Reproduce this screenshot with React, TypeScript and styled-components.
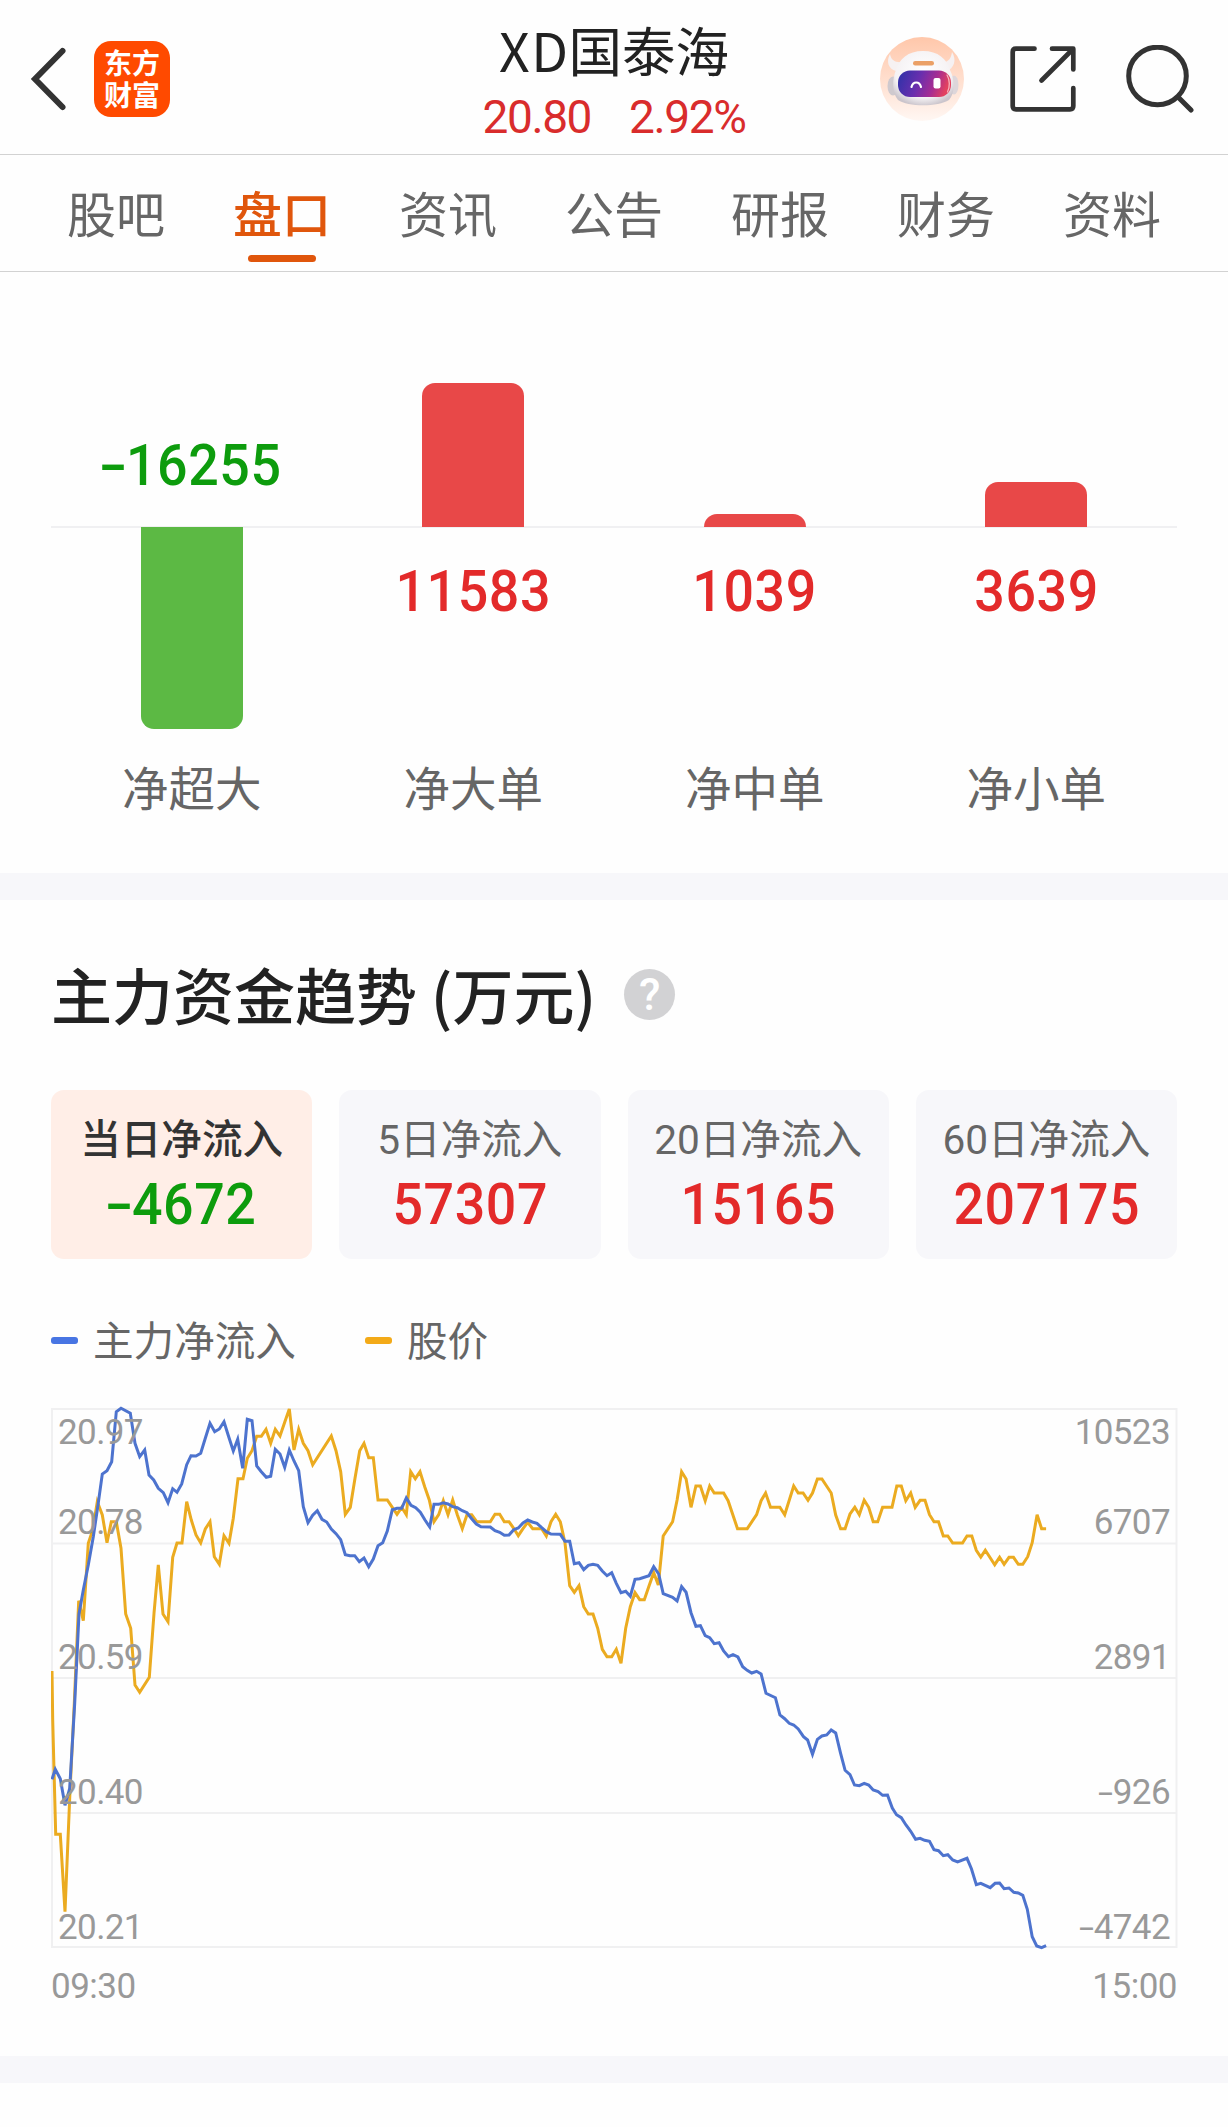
import React from 'react';
import styled, { createGlobalStyle } from 'styled-components';

const RED = '#e32a2a';
const GREEN = '#0d9c0d';
const NUMERIC = 'Roboto, "Noto Sans CJK SC", sans-serif';

const GlobalStyle = createGlobalStyle`
  body {
    margin: 0;
    background: #fefefe;
    font-family: "Noto Sans CJK SC", "Noto Sans", sans-serif;
  }
`;

const Page = styled.main`
  width: 1228px;
  height: 2127px;
  overflow: hidden;
  display: flex;
  flex-direction: column;
  background: #fefefe;
  color: #222;
`;

const Header = styled.header`
  box-sizing: border-box;
  height: 155px;
  flex: none;
  display: grid;
  grid-template-columns: 1fr 300px 1fr;
  border-bottom: 1px solid #d2d2d2;
`;

const HeaderLeft = styled.div`
  display: flex;
  align-items: center;
  gap: 26px;
  padding: 4px 0 0 28px;
`;

const HeaderRight = styled.div`
  display: flex;
  align-items: center;
  justify-content: flex-end;
  padding: 4px 32px 0 0;
`;

const Icon = styled.svg<{ $gap?: number }>`
  display: block;
  flex: none;
  margin-left: ${(p) => p.$gap ?? 0}px;
`;

const Logo = styled.div`
  box-sizing: border-box;
  width: 76px;
  height: 76px;
  padding: 5px 10px 0;
  border-radius: 17px;
  background: #ff4a00;
  color: #fff;
  font-size: 28px;
  line-height: 32px;
  font-weight: 700;
  text-align: center;
  word-break: break-all;
`;

const Quote = styled.div`
  display: flex;
  flex-direction: column;
  align-items: center;
  padding-top: 16px;
`;

const StockName = styled.div`
  font-size: 53.5px;
  line-height: 66px;
  white-space: nowrap;
`;

const Ticker = styled.span`
  margin-right: -1px;
  letter-spacing: 1.5px;
`;

const PriceRow = styled.div`
  display: flex;
  gap: 38px;
  font-family: ${NUMERIC};
  font-size: 46px;
  line-height: 70px;
  letter-spacing: -1.4px;
  color: #d92c2c;
`;

const Tabs = styled.nav`
  box-sizing: border-box;
  height: 117px;
  flex: none;
  display: grid;
  grid-template-columns: repeat(7, 166px);
  padding: 0 33px;
  border-bottom: 1px solid #d2d2d2;
`;

const Tab = styled.div<{ $active?: boolean }>`
  display: flex;
  flex-direction: column;
  align-items: center;
  padding-top: 17px;
  gap: 3px;
  font-size: 49px;
  line-height: 80px;
  color: ${(p) => (p.$active ? '#e0560c' : '#666')};
  font-weight: ${(p) => (p.$active ? 500 : 400)};
`;

const Underline = styled.span`
  width: 68px;
  height: 7px;
  border-radius: 4px;
  background: #e0560c;
`;

const OrderFlow = styled.section`
  height: 601px;
  flex: none;
  display: grid;
  grid-template-columns: repeat(4, 1fr);
  padding: 0 51px;
`;

const FlowColumn = styled.div`
  display: flex;
  flex-direction: column;
  align-items: center;
`;

const UpperHalf = styled.div`
  box-sizing: border-box;
  width: 100%;
  height: 256px;
  display: flex;
  flex-direction: column;
  align-items: center;
  justify-content: flex-end;
  border-bottom: 2px solid #f0f0f2;
`;

const LowerHalf = styled.div`
  height: 228px;
  display: flex;
  flex-direction: column;
  align-items: center;
`;

const Bar = styled.div<{ $up: boolean }>`
  width: 102px;
  margin: ${(p) => (p.$up ? '0 0 -1px' : '-1px 0 0')};
  flex: none;
  border-radius: ${(p) => (p.$up ? '13px 13px 0 0' : '0 0 13px 13px')};
  background: ${(p) => (p.$up ? '#e84848' : '#5cb944')};
`;

const Amount = styled.div<{ $up: boolean }>`
  font-family: ${NUMERIC};
  font-size: 57.5px;
  line-height: 60px;
  letter-spacing: 0.6px;
  font-weight: 500;
  transform: scaleX(0.935);
  color: ${(p) => (p.$up ? RED : GREEN)};
`;

const FlowAmount = styled(Amount)`
  padding: ${(p) => (p.$up ? '34px 0 0' : '0 0 30px')};
`;

const Minus = styled.span`
  display: inline-block;
  width: 0.46em;
  text-align: center;
  transform: scaleX(1.55);
`;

const FlowLabel = styled.div`
  font-size: 46.5px;
  line-height: 60px;
  color: #666;
`;

const Band = styled.div`
  height: 27px;
  flex: none;
  background: #f7f7fa;
`;

const Trend = styled.section`
  height: 1156px;
  flex: none;
  display: flex;
  flex-direction: column;
  padding: 0 51px;
`;

const TrendTitle = styled.h2`
  margin: 0;
  padding-top: 48px;
  height: 142px;
  display: flex;
  align-items: flex-start;
  font-size: 61px;
  line-height: 92px;
  font-weight: 500;
  white-space: pre;
`;

const Help = styled.span`
  width: 51px;
  height: 51px;
  margin: 21px 0 0 28px;
  border-radius: 50%;
  background: #d2d2d4;
  color: #fff;
  font-family: ${NUMERIC};
  font-size: 44px;
  line-height: 52px;
  text-align: center;
`;

const Cards = styled.div`
  display: grid;
  grid-template-columns: repeat(4, 1fr);
  gap: 27px;
`;

const Card = styled.div<{ $active?: boolean }>`
  box-sizing: border-box;
  height: 169px;
  padding-top: 20px;
  border-radius: 13px;
  display: flex;
  flex-direction: column;
  align-items: center;
  gap: 5px;
  background: ${(p) => (p.$active ? '#ffeee7' : '#f7f7fa')};
`;

const CardLabel = styled.div<{ $active?: boolean }>`
  font-family: ${NUMERIC};
  font-size: 40.6px;
  line-height: 60px;
  color: ${(p) => (p.$active ? '#333' : '#666')};
  font-weight: ${(p) => (p.$active ? 500 : 400)};
`;

const Legend = styled.div`
  display: flex;
  gap: 69px;
  padding-top: 50px;
  height: 100px;
`;

const LegendItem = styled.div`
  display: flex;
  align-items: center;
  gap: 15px;
  height: 60px;
  font-size: 40.6px;
  line-height: 60px;
  color: #666;
`;

const Dash = styled.i<{ $color: string }>`
  width: 27px;
  height: 7px;
  margin-top: 2px;
  border-radius: 3px;
  background: ${(p) => p.$color};
`;

const Plot = styled.div`
  position: relative;
  height: 538px;
`;

const PlotSvg = styled.svg`
  position: absolute;
  left: 0;
  top: -10px;
`;

const AxisLabels = styled.div<{ $side: 'left' | 'right' }>`
  position: absolute;
  top: 0;
  bottom: -1px;
  ${(p) => p.$side}: 7px;
  display: flex;
  flex-direction: column;
  justify-content: flex-end;
  text-align: ${(p) => p.$side};
  font-family: ${NUMERIC};
  font-size: 35px;
  letter-spacing: -0.6px;
  color: #999;
`;

const AxisLabel = styled.span`
  height: 135px;
  flex: none;
  display: flex;
  flex-direction: column;
  justify-content: flex-end;
  line-height: 40px;

  &:first-child {
    height: 40px;
  }

  &:nth-child(2) {
    height: 90px;
  }
`;

const TimeRow = styled.div`
  display: flex;
  justify-content: space-between;
  padding-top: 18px;
  font-family: ${NUMERIC};
  font-size: 35px;
  line-height: 44px;
  letter-spacing: -0.5px;
  color: #999;
`;

/* A run of samples stored on a local grid: origin, horizontal scale, flat [x, y, ...] list. */
type Run = { ox: number; oy: number; sx: number; pts: number[] };

const trace = (runs: Run[]) =>
  runs
    .flatMap(({ ox, oy, sx, pts }) =>
      Array.from({ length: pts.length / 2 }, (_, i) => {
        const x = ox + pts[2 * i] / sx - 51;
        const y = oy + pts[2 * i + 1] / 3 - 1399;
        return `${x.toFixed(1)},${y.toFixed(1)}`;
      }),
    )
    .join(' ');

const PRICE: Run[] = [
  {
    ox: 40, oy: 1390, sx: 3,
    pts: [36,843, 38,990, 47,1333, 61,1333, 75,1565, 89,1225, 103,940, 116,632, 130,692, 145,460, 158,420, 172,335, 187,375, 201,458, 214,395, 229,395, 243,475, 257,672, 272,715, 285,885, 299,907, 328,862, 342,670, 355,525, 369,672, 384,695, 398,502, 411,459, 426,459, 440,335, 454,390, 468,435, 482,459, 496,417, 510,395, 523,500, 538,523, 552,437, 567,460, 580,385, 594,266, 609,266, 622,205, 636,182, 650,139, 664,139, 678,118, 692,160, 706,118, 720,138, 734,97, 748,57, 762,180, 776,118, 790,160, 804,182, 818,224],
  },
  {
    ox: 330, oy: 1390, sx: 3,
    pts: [4,138, 18,182, 32,245, 46,373, 61,352, 75,265, 89,182, 102,160, 116,203, 130,203, 144,330, 172,330, 187,352, 201,373, 215,352, 229,374, 242,245, 256,266, 270,245, 284,290, 298,330, 312,395, 326,374, 340,332, 354,374, 368,330, 382,374, 397,416, 411,374, 425,374, 440,395, 481,395, 495,373, 509,373, 523,395, 537,395, 551,415, 565,437, 579,416, 593,397, 608,416, 635,416, 649,438, 663,395, 677,373, 691,395, 705,459, 719,587, 733,607, 747,587, 761,650, 775,672, 789,672, 803,715, 817,778, 831,800, 845,800, 859,778, 873,820, 887,715, 901,650, 915,608, 929,629, 943,629, 957,588, 971,548, 985,585],
  },
  {
    ox: 640, oy: 1440, sx: 2.667,
    pts: [62,288, 87,245, 99,180, 111,95, 123,117, 136,202, 149,138, 161,138, 174,182, 186,138, 198,159, 223,159, 235,182, 260,266, 286,266, 311,224, 323,182, 335,159, 348,202, 373,202, 386,224, 410,138, 422,159, 435,159, 448,181, 460,159, 473,117, 485,117, 510,159, 522,225, 535,266, 547,266, 560,222, 573,202, 585,224, 598,181, 610,202, 622,245, 634,245, 647,202, 672,202, 685,138, 697,138, 709,182, 722,159, 734,202, 747,181, 760,181, 772,224, 784,245, 796,245, 809,288, 821,288, 834,309, 860,309, 872,288, 885,288, 897,331, 909,351, 921,331, 946,374, 959,352, 971,373, 984,352, 996,352, 1009,373, 1021,373, 1034,350, 1046,308, 1059,224, 1071,266, 1083,266],
  },
];

const INFLOW: Run[] = [
  {
    ox: 40, oy: 1390, sx: 3,
    pts: [36,1168, 46,1138, 61,1166, 75,1246, 89,1195, 104,940, 117,672, 130,600, 145,525, 160,440, 174,345, 187,252, 201,242, 215,215, 229,65, 243,55, 271,70, 285,160, 299,200, 314,180, 327,255, 341,270, 355,295, 370,308, 384,338, 398,296, 411,307, 425,282, 440,224, 453,197, 468,198, 482,190, 496,145, 510,100, 524,125, 538,117, 552,95, 566,140, 580,183, 593,148, 608,235, 622,88, 636,92, 650,228, 664,245, 679,262, 692,259, 706,178, 720,192, 734,232, 748,180, 762,213, 776,242, 790,350, 804,398, 818,376, 832,362, 846,388, 860,396],
  },
  {
    ox: 330, oy: 1390, sx: 3,
    pts: [4,417, 18,431, 32,449, 46,494, 60,497, 74,497, 88,515, 102,504, 116,530, 130,507, 144,467, 158,458, 172,423, 187,359, 201,355, 215,355, 229,324, 243,346, 257,353, 271,367, 285,390, 299,411, 312,343, 326,343, 340,338, 354,342, 368,350, 382,353, 397,362, 411,368, 425,386, 439,402, 453,410, 481,411, 495,422, 509,427, 523,436, 537,435, 551,419, 565,414, 579,399, 593,390, 607,396, 621,400, 635,413, 649,425, 663,432, 691,433, 705,454, 719,454, 733,521, 747,518, 761,539, 775,526, 789,523, 803,526, 817,543, 831,557, 845,548, 859,580, 873,608, 887,604, 901,619, 915,568, 929,566, 957,557, 971,530, 986,552],
  },
  {
    ox: 640, oy: 1440, sx: 2.667,
    pts: [62,461, 87,472, 99,483, 111,440, 123,457, 136,518, 149,559, 161,557, 174,587, 186,593, 198,611, 211,608, 223,633, 236,650, 248,644, 261,651, 274,680, 286,691, 298,699, 311,694],
  },
  {
    ox: 640, oy: 1640, sx: 2.667,
    pts: [323,102, 336,160, 361,173, 373,225, 386,236, 398,250, 410,255, 422,267, 436,290, 447,300, 460,343, 473,298, 485,288, 498,285, 510,270, 522,279, 535,340, 547,391, 560,404, 572,435, 585,437, 598,430, 610,435, 622,450, 635,455, 647,466, 660,465, 673,504, 684,524, 697,533, 709,554, 722,574, 735,598, 747,595, 759,601, 772,604, 784,629, 796,632, 809,647, 821,644, 834,660, 847,666, 872,655, 884,687, 897,734, 909,730, 934,743, 947,730, 959,729, 971,746, 984,744, 997,757, 1009,759, 1021,766, 1033,808, 1046,890, 1058,918, 1071,923, 1083,917],
  },
];

const TABS = ['股吧', '盘口', '资讯', '公告', '研报', '财务', '资料'];

const FLOWS = [
  { label: '净超大', value: -16255 },
  { label: '净大单', value: 11583 },
  { label: '净中单', value: 1039 },
  { label: '净小单', value: 3639 },
];

const PERIODS = [
  { label: '当日净流入', value: -4672 },
  { label: '5日净流入', value: 57307 },
  { label: '20日净流入', value: 15165 },
  { label: '60日净流入', value: 207175 },
];

const PRICE_TICKS = ['20.97', '20.78', '20.59', '20.40', '20.21'];
const INFLOW_TICKS = [10523, 6707, 2891, -926, -4742];
const GRID_ROWS = [144.5, 279, 414];

const barHeight = (value: number) => Math.round(Math.abs(value) * 0.01243);

const Signed = ({ value }: { value: number }) => (
  <span>
    {value < 0 && <Minus>-</Minus>}
    {Math.abs(value)}
  </span>
);

const BackIcon = () => (
  <Icon width="40" height="70" viewBox="0 0 40 70">
    <path d="M34.500 7 7 35 34.500 63" fill="none" stroke="#333" strokeWidth="6" strokeLinecap="round" strokeLinejoin="miter" />
  </Icon>
);

const RobotAvatar = () => (
  <Icon width="84" height="84" viewBox="0 0 84 84">
    <defs>
      <linearGradient id="halo" x1="0" y1="0" x2="0" y2="1">
        <stop offset="0" stopColor="#ffc7aa" />
        <stop offset="0.600" stopColor="#ffe3d5" />
        <stop offset="1" stopColor="#fff7f3" />
      </linearGradient>
      <linearGradient id="visor" x1="0" y1="0" x2="1" y2="0.200">
        <stop offset="0" stopColor="#2b32a8" />
        <stop offset="0.450" stopColor="#6a2fae" />
        <stop offset="0.750" stopColor="#a52c93" />
        <stop offset="1" stopColor="#e24160" />
      </linearGradient>
      <radialGradient id="shell" cx="0.500" cy="0.400" r="0.620">
        <stop offset="0" stopColor="#ffffff" />
        <stop offset="0.750" stopColor="#f5f2f4" />
        <stop offset="1" stopColor="#cbc5cc" />
      </radialGradient>
    </defs>
    <circle cx="42" cy="42" r="42" fill="url(#halo)" />
    <path d="M10 17C6 24 8 32 16 34L23 25C15 26 11 23 10 17Z" fill="#f6f1f2" />
    <path d="M72 15C77 23 74 31 67 34L61 25C68 26 71 22 72 15Z" fill="#f6f1f2" />
    <ellipse cx="13" cy="49" rx="5.500" ry="9.500" fill="#cfc9ce" />
    <ellipse cx="74" cy="48" rx="4.500" ry="9.500" fill="#ddd6da" />
    <path d="M43 14C58 14 67 22 70 33C75 42 75 57 69 63C58 70 28 70 18 63C12 56 12 42 16 33C19 22 28 14 43 14Z" fill="url(#shell)" />
    <rect x="18" y="33.500" width="53" height="26.500" rx="12" fill="url(#visor)" />
    <rect x="33" y="24" width="21" height="4.500" rx="2.200" fill="#eba066" />
    <path d="M31.500 50C33 44 39.500 44 41 50" fill="none" stroke="#fff" strokeWidth="2.200" strokeLinecap="round" />
    <rect x="53.500" y="41" width="7" height="10.500" rx="2" fill="#fff" />
    <path d="M67 38C70 43 70 50 67.500 55" fill="none" stroke="#f7b4bb" strokeWidth="1.300" strokeLinecap="round" />
  </Icon>
);

const ShareIcon = () => (
  <Icon $gap={46} width="66" height="66" viewBox="0 0 66 66">
    <g fill="none" stroke="#333" strokeWidth="4.700" strokeLinecap="round" strokeLinejoin="round">
      <path d="M24.500 2.700H6Q2.700 2.700 2.700 6V60Q2.700 63.300 6 63.300H60Q63.300 63.300 63.300 60V42" />
      <path d="M42 2.700H63.300V23.500M62 4 31.500 34.500" />
    </g>
  </Icon>
);

const SearchIcon = () => (
  <Icon $gap={50} width="70" height="68" viewBox="0 0 70 68">
    <g fill="none" stroke="#333" strokeWidth="5" strokeLinecap="round">
      <circle cx="31.500" cy="31" r="28.800" />
      <path d="M52.500 52.500 65 65" />
    </g>
  </Icon>
);

const TrendChart = () => (
  <Plot>
    <PlotSvg width="1128" height="556" viewBox="0 0 1128 556">
      <rect x="1" y="10" width="1124.500" height="538" fill="none" stroke="#f0f0f1" strokeWidth="2" />
      {GRID_ROWS.map((y) => (
        <line key={y} x1="1" x2="1125.500" y1={y} y2={y} stroke="#f0f0f1" strokeWidth="2" />
      ))}
      <polyline points={trace(PRICE)} fill="none" stroke="#ebab20" strokeWidth="3" />
      <polyline points={trace(INFLOW)} fill="none" stroke="#4d73ce" strokeWidth="3" />
    </PlotSvg>
    <AxisLabels $side="left">
      {PRICE_TICKS.map((tick) => (
        <AxisLabel key={tick}>{tick}</AxisLabel>
      ))}
    </AxisLabels>
    <AxisLabels $side="right">
      {INFLOW_TICKS.map((tick) => (
        <AxisLabel key={tick}>
          <Signed value={tick} />
        </AxisLabel>
      ))}
    </AxisLabels>
  </Plot>
);

export default function App() {
  return (
    <>
      <GlobalStyle />
      <Page>
        <Header>
          <HeaderLeft>
            <BackIcon />
            <Logo>东方财富</Logo>
          </HeaderLeft>
          <Quote>
            <StockName>
              <Ticker>XD</Ticker>国泰海
            </StockName>
            <PriceRow>
              <span>20.80</span>
              <span>2.92%</span>
            </PriceRow>
          </Quote>
          <HeaderRight>
            <RobotAvatar />
            <ShareIcon />
            <SearchIcon />
          </HeaderRight>
        </Header>
        <Tabs>
          {TABS.map((tab, i) => (
            <Tab key={tab} $active={i === 1}>
              {tab}
              {i === 1 && <Underline />}
            </Tab>
          ))}
        </Tabs>
        <OrderFlow>
          {FLOWS.map(({ label, value }) => {
            const up = value > 0;
            const bar = <Bar $up={up} style={{ height: barHeight(value) }} />;
            const amount = (
              <FlowAmount $up={up}>
                <Signed value={value} />
              </FlowAmount>
            );
            return (
              <FlowColumn key={label}>
                <UpperHalf>{up ? bar : amount}</UpperHalf>
                <LowerHalf>{up ? amount : bar}</LowerHalf>
                <FlowLabel>{label}</FlowLabel>
              </FlowColumn>
            );
          })}
        </OrderFlow>
        <Band />
        <Trend>
          <TrendTitle>
            主力资金趋势 (万元)
            <Help>?</Help>
          </TrendTitle>
          <Cards>
            {PERIODS.map(({ label, value }, i) => (
              <Card key={label} $active={i === 0}>
                <CardLabel $active={i === 0}>{label}</CardLabel>
                <Amount $up={value > 0}>
                  <Signed value={value} />
                </Amount>
              </Card>
            ))}
          </Cards>
          <Legend>
            <LegendItem>
              <Dash $color="#4875e3" />
              主力净流入
            </LegendItem>
            <LegendItem>
              <Dash $color="#f3aa18" />
              股价
            </LegendItem>
          </Legend>
          <TrendChart />
          <TimeRow>
            <span>09:30</span>
            <span>15:00</span>
          </TimeRow>
        </Trend>
        <Band />
      </Page>
    </>
  );
}
